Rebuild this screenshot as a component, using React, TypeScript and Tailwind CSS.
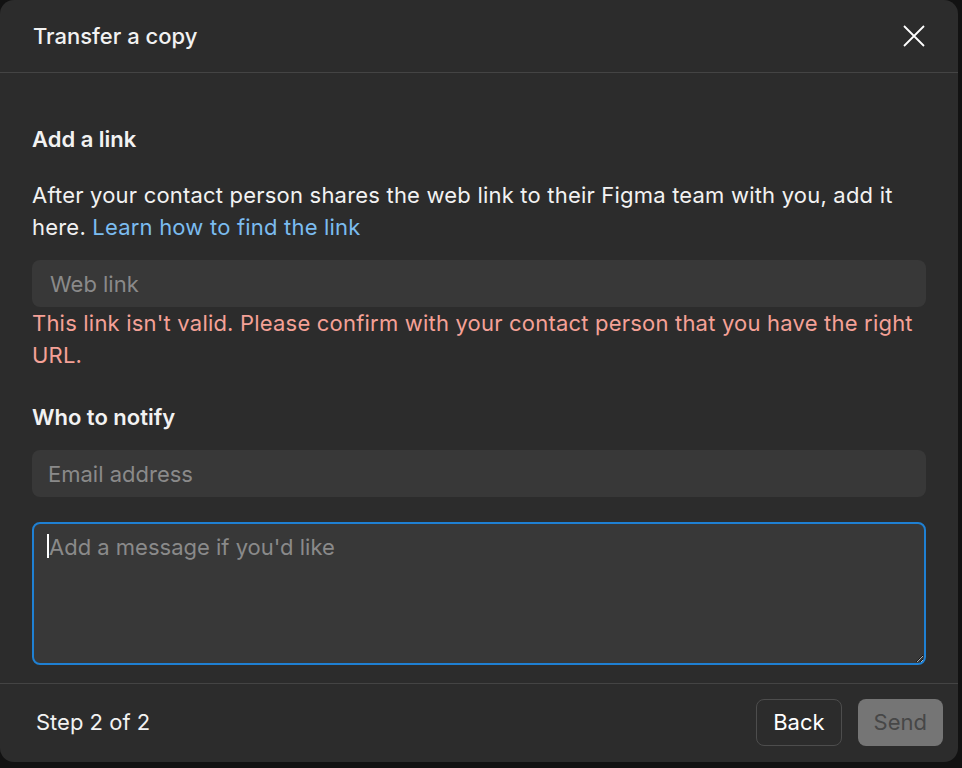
const App = () => {
  return (
    <div className="min-h-screen w-full bg-[#121212] font-['Inter',sans-serif]">
      <div className="flex w-[958px] flex-col rounded-[14px] bg-[#2c2c2c] text-[#f2f2f2]">
        <div className="flex h-[73px] items-center justify-between border-b border-[#444] pl-[33px] pr-[28px]">
          <p className="text-[22px] font-medium">Transfer a copy</p>
          <button className="flex h-8 w-8 items-center justify-center text-white">
            <svg width="24" height="24" viewBox="0 0 24 24" fill="none" stroke="currentColor" strokeWidth="1.8">
              <path d="M2 2 L22 22 M22 2 L2 22" />
            </svg>
          </button>
        </div>

        <div className="flex flex-col px-[32px] pt-[50px] pb-[18px]">
          <p className="text-[22px] leading-[32px] font-semibold">Add a link</p>
          <p className="mt-[24px] text-[22px] leading-[32px] tracking-[0.2px]">
            After your contact person shares the web link to their Figma team with you, add it here.{' '}
            <span className="text-[#7bbcf0]">Learn how to find the link</span>
          </p>
          <input
            className="mt-[17px] h-[47px] w-full rounded-lg bg-[#383838] px-[18px] text-[22px] outline-none placeholder-[#8a8a8a]"
            placeholder="Web link"
          />
          <p className="text-[22px] leading-[32px] tracking-[0.2px] text-[#f5a197]">
            This link isn't valid. Please confirm with your contact person that you have the right URL.
          </p>

          <p className="mt-[30px] text-[22px] leading-[32px] font-semibold">Who to notify</p>
          <input
            className="mt-[17px] h-[47px] w-full rounded-lg bg-[#383838] px-[16px] text-[22px] outline-none placeholder-[#8a8a8a]"
            placeholder="Email address"
          />
          <div className="relative mt-[25px]">
            <textarea
              className="block h-[143px] w-full rounded-lg border-2 border-[#1f80d3] bg-[#383838] px-[15px] py-[8px] text-[22px] leading-[30px] caret-white outline-none placeholder-[#8a8a8a]"
              placeholder="Add a message if you'd like"
            />
            <div className="pointer-events-none absolute left-[15px] top-[12px] h-[24px] w-[2px] bg-white" />
          </div>
        </div>

        <div className="flex h-[79px] items-center justify-between border-t border-[#444] pl-[36px] pr-[15px] pb-[2px]">
          <p className="text-[22px]">Step 2 of 2</p>
          <div className="flex gap-4">
            <button className="h-[47px] rounded-lg border border-[#4d4d4d] px-[16px] text-[22px] text-white">Back</button>
            <button className="h-[47px] rounded-lg bg-[#757575] px-[16px] text-[22px] text-[#474747]">Send</button>
          </div>
        </div>
      </div>
    </div>
  )
}

export default App
